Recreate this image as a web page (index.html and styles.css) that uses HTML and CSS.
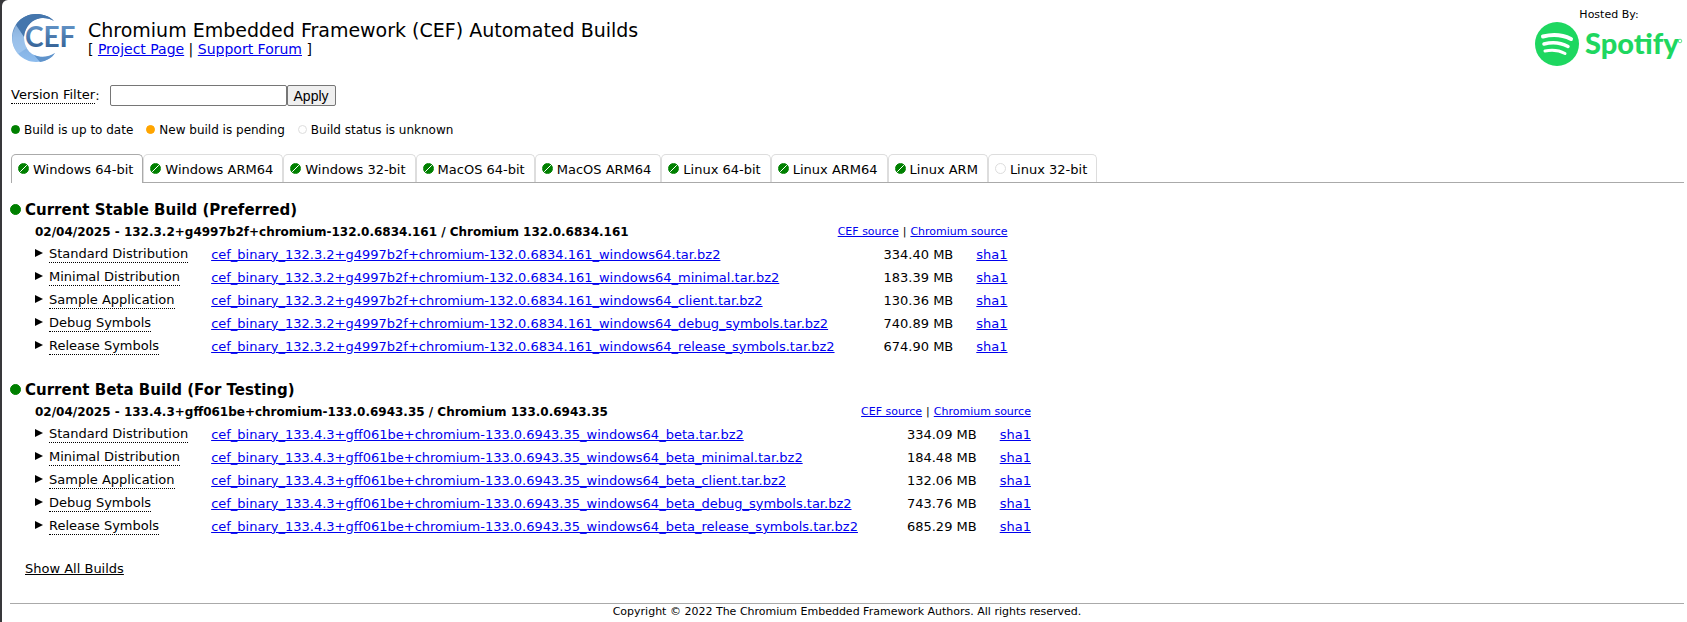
FILE: index.html
```html
<!DOCTYPE html>
<html lang="en">
<head>
    <meta charset="UTF-8">
    <title>CEF Automated Builds</title>
    <link rel="stylesheet" href="styles.css">
</head>
<body>
    <div class="header">
        <svg class="logo" width="64" height="50" viewBox="0 0 64 50">
            <defs>
                <linearGradient id="ring" x1="0" y1="0" x2="0" y2="1">
                    <stop offset="0" stop-color="#3c6ea5"/>
                    <stop offset="0.5" stop-color="#7fabdc"/>
                    <stop offset="1" stop-color="#8ebdee"/>
                </linearGradient>
                <linearGradient id="word" x1="0" y1="0" x2="0" y2="1">
                    <stop offset="0" stop-color="#6e9fd2"/>
                    <stop offset="1" stop-color="#2c588c"/>
                </linearGradient>
            </defs>
            <path fill="url(#ring)" d="M42 7C37 2 31 0 24 0 10 0 0 11 0 24s11 24 24 24c8 0 15-3 19-9-4 3-8 4-12 4-11 0-19-8-19-19S20 4 31 4c4 0 8 1 11 3z"/>
            <path fill="#4576ad" d="M42 7C37 2 31 0 24 0 16 0 8 4 4 11l8 12C13 12 21 4 31 4c4 0 8 1 11 3z"/>
            <path fill="#b4d4f5" d="M1 19l3-8 8 12c0 4 1 8 3 11L6 40C2 35-1 27 1 19z" opacity=".5"/>
            <path fill="#5f93cb" d="M22 41l6 7c6-1 12-4 15-9-6 4-14 5-21 2z"/>
            <text class="cef" x="13" y="33" fill="url(#word)">CEF</text>
        </svg>
        <div class="titles">
            <h1>Chromium Embedded Framework (CEF) Automated Builds</h1>
            <div class="links">[&nbsp;<a href="#">Project Page</a>&nbsp;|&nbsp;<a href="#">Support Forum</a>&nbsp;]</div>
        </div>
        <div class="host">
            <div>Hosted By:</div>
            <a href="#" aria-label="Spotify">
                <svg width="150" height="46" viewBox="0 0 150 46">
                    <circle cx="23" cy="22" r="22" fill="#1ed760"/>
                    <g fill="none" stroke="#fff" stroke-linecap="round">
                        <path stroke-width="4" d="M9 14.500c10-2.500 20-1.500 28 2.500"/>
                        <path stroke-width="3.500" d="M10 22c9-2.300 17-1.300 24 2.500"/>
                        <path stroke-width="3" d="M11 29c8-1.600 14-.8 20 2.500"/>
                    </g>
                    <text class="spotify" x="51" y="32">Spotify</text>
                    <circle cx="146" cy="19" r="1.800" fill="none" stroke="#1ed760" stroke-width=".7"/>
                </svg>
            </a>
        </div>
    </div>

    <form class="filter">
        <label for="version" class="hint">Version Filter</label>:
        <input type="text" id="version"><button type="button">Apply</button>
    </form>

    <div class="legend">
        <span><i class="dot green"></i>Build is up to date</span>
        <span><i class="dot orange"></i>New build is pending</span>
        <span><i class="dot"></i>Build status is unknown</span>
    </div>

    <div class="tabs">
        <button class="tab active"><i class="dot green slash"></i>Windows 64-bit</button>
        <button class="tab"><i class="dot green slash"></i>Windows ARM64</button>
        <button class="tab"><i class="dot green slash"></i>Windows 32-bit</button>
        <button class="tab"><i class="dot green slash"></i>MacOS 64-bit</button>
        <button class="tab"><i class="dot green slash"></i>MacOS ARM64</button>
        <button class="tab"><i class="dot green slash"></i>Linux 64-bit</button>
        <button class="tab"><i class="dot green slash"></i>Linux ARM64</button>
        <button class="tab"><i class="dot green slash"></i>Linux ARM</button>
        <button class="tab"><i class="dot"></i>Linux 32-bit</button>
    </div>

    <div class="build">
        <h2><i class="dot green"></i>Current Stable Build (Preferred)</h2>
        <table>
            <tr>
                <th colspan="2">02/04/2025 - 132.3.2+g4997b2f+chromium-132.0.6834.161 / Chromium 132.0.6834.161</th>
                <td colspan="2" class="source"><div><a href="#">CEF source</a> | <a href="#">Chromium source</a></div></td>
            </tr>
            <tr>
                <td><button class="toggle"><span class="hint">Standard Distribution</span></button></td>
                <td><a href="#">cef_binary_132.3.2+g4997b2f+chromium-132.0.6834.161_windows64.tar.bz2</a></td>
                <td>334.40 MB</td>
                <td><a href="#">sha1</a></td>
            </tr>
            <tr>
                <td><button class="toggle"><span class="hint">Minimal Distribution</span></button></td>
                <td><a href="#">cef_binary_132.3.2+g4997b2f+chromium-132.0.6834.161_windows64_minimal.tar.bz2</a></td>
                <td>183.39 MB</td>
                <td><a href="#">sha1</a></td>
            </tr>
            <tr>
                <td><button class="toggle"><span class="hint">Sample Application</span></button></td>
                <td><a href="#">cef_binary_132.3.2+g4997b2f+chromium-132.0.6834.161_windows64_client.tar.bz2</a></td>
                <td>130.36 MB</td>
                <td><a href="#">sha1</a></td>
            </tr>
            <tr>
                <td><button class="toggle"><span class="hint">Debug Symbols</span></button></td>
                <td><a href="#">cef_binary_132.3.2+g4997b2f+chromium-132.0.6834.161_windows64_debug_symbols.tar.bz2</a></td>
                <td>740.89 MB</td>
                <td><a href="#">sha1</a></td>
            </tr>
            <tr>
                <td><button class="toggle"><span class="hint">Release Symbols</span></button></td>
                <td><a href="#">cef_binary_132.3.2+g4997b2f+chromium-132.0.6834.161_windows64_release_symbols.tar.bz2</a></td>
                <td>674.90 MB</td>
                <td><a href="#">sha1</a></td>
            </tr>
        </table>
    </div>

    <div class="build">
        <h2><i class="dot green"></i>Current Beta Build (For Testing)</h2>
        <table>
            <tr>
                <th colspan="2">02/04/2025 - 133.4.3+gff061be+chromium-133.0.6943.35 / Chromium 133.0.6943.35</th>
                <td colspan="2" class="source"><div><a href="#">CEF source</a> | <a href="#">Chromium source</a></div></td>
            </tr>
            <tr>
                <td><button class="toggle"><span class="hint">Standard Distribution</span></button></td>
                <td><a href="#">cef_binary_133.4.3+gff061be+chromium-133.0.6943.35_windows64_beta.tar.bz2</a></td>
                <td>334.09 MB</td>
                <td><a href="#">sha1</a></td>
            </tr>
            <tr>
                <td><button class="toggle"><span class="hint">Minimal Distribution</span></button></td>
                <td><a href="#">cef_binary_133.4.3+gff061be+chromium-133.0.6943.35_windows64_beta_minimal.tar.bz2</a></td>
                <td>184.48 MB</td>
                <td><a href="#">sha1</a></td>
            </tr>
            <tr>
                <td><button class="toggle"><span class="hint">Sample Application</span></button></td>
                <td><a href="#">cef_binary_133.4.3+gff061be+chromium-133.0.6943.35_windows64_beta_client.tar.bz2</a></td>
                <td>132.06 MB</td>
                <td><a href="#">sha1</a></td>
            </tr>
            <tr>
                <td><button class="toggle"><span class="hint">Debug Symbols</span></button></td>
                <td><a href="#">cef_binary_133.4.3+gff061be+chromium-133.0.6943.35_windows64_beta_debug_symbols.tar.bz2</a></td>
                <td>743.76 MB</td>
                <td><a href="#">sha1</a></td>
            </tr>
            <tr>
                <td><button class="toggle"><span class="hint">Release Symbols</span></button></td>
                <td><a href="#">cef_binary_133.4.3+gff061be+chromium-133.0.6943.35_windows64_beta_release_symbols.tar.bz2</a></td>
                <td>685.29 MB</td>
                <td><a href="#">sha1</a></td>
            </tr>
        </table>
    </div>

    <a class="show-all" href="#">Show All Builds</a>

    <div class="footer">Copyright © 2022 The Chromium Embedded Framework Authors. All rights reserved.</div>
</body>
</html>
```
FILE: styles.css
```css
html{background: #38383b;}
body{min-height: 100vh;margin: 0 0 0 2px;padding: 8px 3px 0 8px;box-sizing: border-box;background: #fff;border-top-left-radius: 6px;font: 13px/16px Verdana, "DejaVu Sans", sans-serif;color: #000;}
h1, h2{margin: 0;}
a{color: #0000ee;}
button{font: inherit;color: inherit;}

.header{display: flex;height: 60px;}
.logo{margin: 6px 12px 0 2px;}
.cef{font: bold 28px Lato, sans-serif;}
.titles{flex: 1;padding-top: 10px;}
.links{font-size: 14px;line-height: 15px;}
h1{font-size: 19px;line-height: 24px;font-weight: normal;}
.host{font-size: 11px;line-height: 14px;text-align: center;}
.host svg{display: block;}
.spotify{font: 900 29px Lato, sans-serif;fill: #1ed760;}

.hint{border-bottom: 1px dotted #000;}
.filter{display: flex;align-items: center;margin: 17px 0 0 1px;}
.filter input{width: 177px;height: 21px;margin-left: 10px;padding: 1px 2px;border: 1px solid #767676;border-radius: 2px;box-sizing: border-box;}
.filter button{height: 21px;padding: 0 6px;border: 1px solid #767676;border-radius: 2px;background: #efefef;font: 14px "Liberation Sans", sans-serif;}

.dot{display: inline-block;width: 9px;height: 9px;margin-right: 4px;border: 1px solid #ddd;border-radius: 50%;box-sizing: border-box;}
.green{background: green;border-color: green;}
.orange{background: orange;border-color: orange;}
.slash{background: linear-gradient(135deg, green 46%, #fff 46%, #fff 54%, green 54%);}
.legend{display: flex;gap: 13px;margin: 16px 0 0 1px;font-size: 12px;}

.tabs{display: flex;margin: 16px 0 17px 1px;border-bottom: 1px solid #aaa;}
.tab{height: 28px;padding: 2px 9px 0 6px;border: 1px solid #ddd;border-bottom: 0;border-radius: 5px 5px 0 0;background: #fff;white-space: nowrap;}
.tab.active{margin-bottom: -1px;height: 29px;border-color: #aaa;}
.tab .dot, h2 .dot{width: 11px;height: 11px;}

.build{margin-bottom: 22px;}
h2{font-size: 15px;line-height: 20px;}
table{margin-left: 25px;border-collapse: collapse;}
td, th{height: 23px;padding: 0 23px 0 0;text-align: left;white-space: nowrap;}
th{font-size: 12px;}
td:nth-child(2){padding-right: 49px;}
td:last-child{padding-right: 0;}
.source{font-size: 11px;}
.source div{display: flex;justify-content: flex-end;gap: 4px;width: 0;min-width: 100%;}
.toggle{display: flex;align-items: center;padding: 0;border: 0;background: none;}
.toggle::before{content: "";margin: 0 6px 3px 0;border-left: 8px solid #000;border-top: 4px solid transparent;border-bottom: 4px solid transparent;}

.show-all{display: inline-block;margin: 1px 0 0 15px;color: #000;}
.footer{margin-top: 26px;border-top: 1px solid #aaa;font-size: 11px;text-align: center;}
```
